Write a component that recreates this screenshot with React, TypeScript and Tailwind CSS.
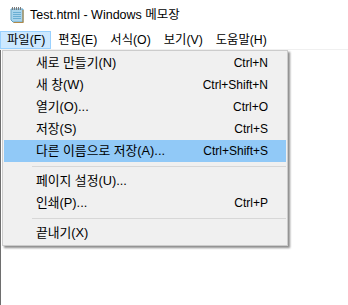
import React from 'react';

const menus = ['파일(F)', '편집(E)', '서식(O)', '보기(V)', '도움말(H)'];

type Item = { label: string; shortcut?: string; active?: boolean } | 'sep';

const items: Item[] = [
  { label: '새로 만들기(N)', shortcut: 'Ctrl+N' },
  { label: '새 창(W)', shortcut: 'Ctrl+Shift+N' },
  { label: '열기(O)...', shortcut: 'Ctrl+O' },
  { label: '저장(S)', shortcut: 'Ctrl+S' },
  { label: '다른 이름으로 저장(A)...', shortcut: 'Ctrl+Shift+S', active: true },
  'sep',
  { label: '페이지 설정(U)...' },
  { label: '인쇄(P)...', shortcut: 'Ctrl+P' },
  'sep',
  { label: '끝내기(X)' },
];

function NotepadIcon() {
  return (
    <svg width="17" height="18" viewBox="0 0 17 18" className="shrink-0">
      <path d="M2 3h12v13H4l-2-2z" fill="#b8ddf0" stroke="#5b9fc4" strokeWidth="1" />
      <path d="M14 4v12.5H4.5" fill="none" stroke="#b08a4a" strokeWidth="1.2" />
      <path d="M3 4h10v11H3z" fill="#a9d4ec" />
      {[6.5, 8.5, 10.5, 12.5].map((y) => (
        <path key={y} d={`M4 ${y}h8`} stroke="#6aaed3" strokeWidth="1" />
      ))}
      {[3.5, 5.5, 7.5, 9.5, 11.5].map((x) => (
        <path key={x} d={`M${x} 1v3`} stroke="#7a7a7a" strokeWidth="1" />
      ))}
    </svg>
  );
}

export default function App() {
  return (
    <div
      className="relative h-[305px] w-[348px] overflow-hidden bg-white text-[12px] text-black"
      style={{ fontFamily: '"Liberation Sans", "Noto Sans CJK KR", sans-serif' }}
    >
      <div className="flex h-[30px] items-center gap-[4px] pl-[9px]">
        <NotepadIcon />
        <span className="text-[12.5px]">Test.html - Windows 메모장</span>
      </div>

      <div className="flex h-[20px] border-b border-[#f0f0f0] pt-[1px] text-[12.3px]">
        {menus.map((m, i) => (
          <div
            key={m}
            className={`flex h-[18px] items-center border pl-[6px] pr-[5px] ${
              i === 0 ? 'border-[#99d1ff] bg-[#cce8ff]' : 'border-transparent'
            }`}
          >
            {m}
          </div>
        ))}
      </div>

      <div className="absolute bottom-0 left-0 top-[50px] w-px bg-[#6e6e6e]" />

      <div className="absolute left-[2px] top-[50px] w-[286px] border border-[#cccccc] bg-[#f0f0f0] py-[1px] shadow-[2px_2px_2px_rgba(0,0,0,0.45)]">
        {items.map((it, i) =>
          it === 'sep' ? (
            <div key={i} className="py-[3.5px]">
              <div className="ml-[29px] mr-px h-px bg-[#d7d7d7]" />
            </div>
          ) : (
            <div
              key={i}
              className={`mx-px flex h-[22px] items-center justify-between pl-[32px] pr-[18px] ${
                it.active ? 'bg-[#91c9f7]' : ''
              }`}
            >
              <span className="text-[12.8px]">{it.label}</span>
              {it.shortcut && <span>{it.shortcut}</span>}
            </div>
          )
        )}
      </div>
    </div>
  );
}
